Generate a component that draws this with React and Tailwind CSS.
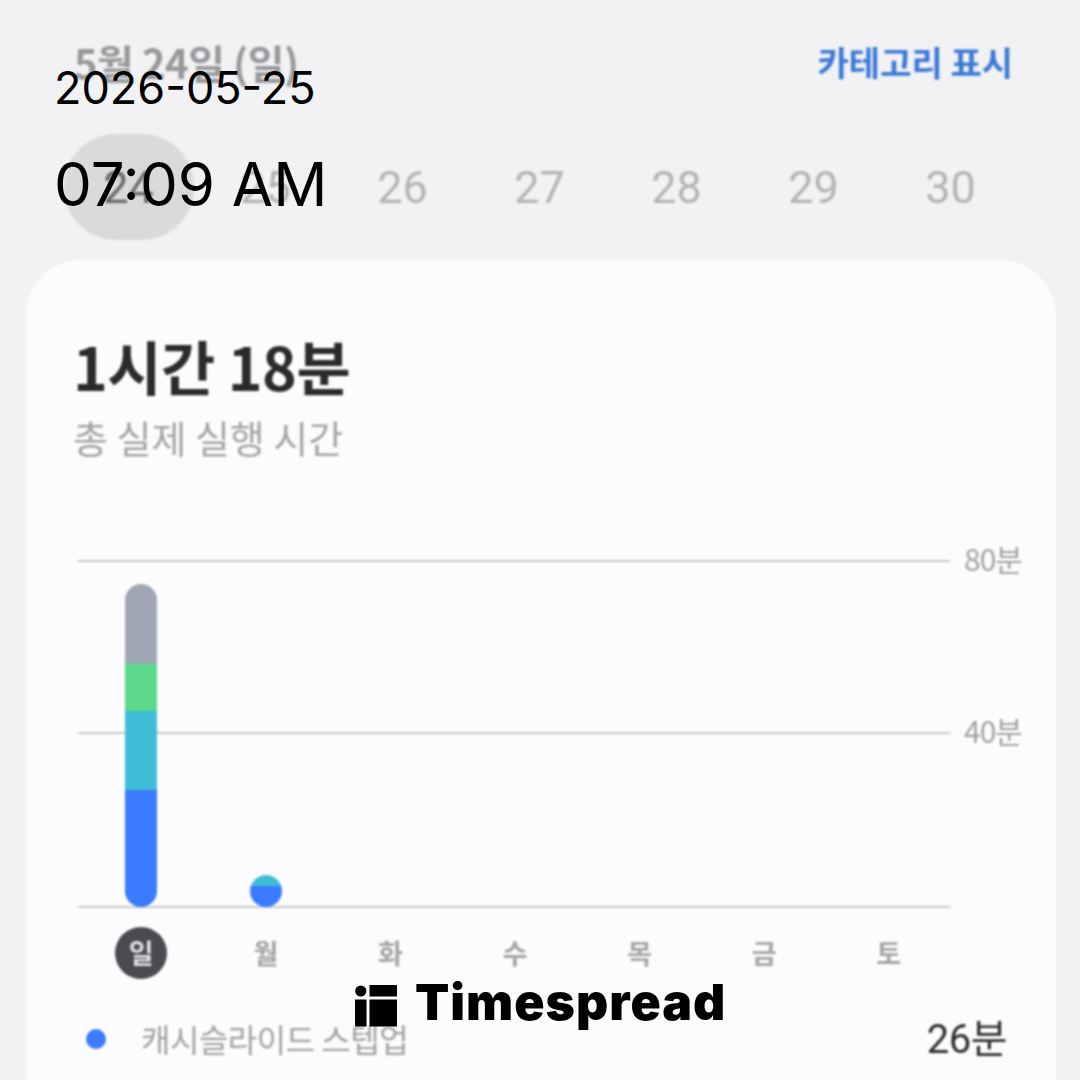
const kr = { fontFamily: '"Noto Sans CJK KR", sans-serif' };
const num = { fontFamily: 'Roboto, "Noto Sans CJK KR", sans-serif' };

const dates = ["24", "25", "26", "27", "28", "29", "30"];
const days = ["일", "월", "화", "수", "목", "금", "토"];

function GridLine({ label, className }) {
  return (
    <div className={className + " flex items-center h-[2px]"}>
      <div className="w-[872px] h-[2px] bg-[#c9c9cd]" />
      {label && <span className="ml-[14px] -translate-y-[3px] text-[30px] text-[#a2a2a5] tracking-[-1px]">{label}</span>}
    </div>
  );
}

export default function App() {
  return (
    <div className="relative w-[1080px] h-[1080px] overflow-hidden bg-[#f2f2f4]">
      <div className="blur-[0.8px]" style={kr}>
        <div className="flex justify-between items-center pl-[74px] pr-[67px] pt-[37px] h-[86px]">
          <span className="text-[40px] font-bold text-[#98989c] tracking-[-0.5px] leading-none">5월 24일 (일)</span>
          <span className="text-[34px] font-bold text-[#3b79d6] leading-none">카테고리 표시</span>
        </div>
        <div className="flex pl-[60px] mt-[48px] h-[106px]">
          {dates.map((d, i) => (
            <div
              key={d}
              className={
                i === 0
                  ? "w-[137px] flex items-center justify-center text-[45px] leading-none text-[#68686c]"
                  : "w-[137px] flex items-center justify-center text-[45px] leading-none text-[#b4b4b7]"
              }
              style={num}
            >
              {i === 0 ? (
                <span className="w-[130px] shrink-0 h-[106px] rounded-[52px] bg-[#dadadc] flex items-center justify-center">{d}</span>
              ) : (
                <span>{d}</span>
              )}
            </div>
          ))}
        </div>
        <div className="mt-[20px] ml-[26px] w-[1030px] h-[900px] rounded-t-[56px] bg-[#fcfcfe] pt-[74px] pl-[47px]">
          <div className="text-[59px] font-bold leading-[64px] text-[#2b2b2e] tracking-[-0.5px]">1시간 18분</div>
          <div className="mt-[16px] text-[38px] leading-[46px] text-[#a4a4a7]">총 실제 실행 시간</div>
          <div className="relative mt-[100px] ml-[5px] h-[348px] flex flex-col">
            <GridLine label="80분" className="" />
            <GridLine label="40분" className="mt-[170px]" />
            <GridLine className="mt-[172px]" />
            <div className="absolute left-[47px] bottom-[1px] w-[32px] h-[323px] rounded-full overflow-hidden flex flex-col">
              <div className="h-[80px] bg-[#a0a7b4]" />
              <div className="h-[47px] bg-[#5cd98a]" />
              <div className="h-[79px] bg-[#3fbdd6]" />
              <div className="h-[117px] bg-[#3a7bff]" />
            </div>
            <div className="absolute left-[172px] bottom-[1px] w-[32px] h-[32px] rounded-full overflow-hidden flex flex-col">
              <div className="h-[11px] bg-[#3fbdd6]" />
              <div className="h-[21px] bg-[#3a7bff]" />
            </div>
          </div>
          <div className="flex mt-[19px] ml-[6px] w-[872px]">
            {days.map((d, i) => (
              <div key={d} className="w-[124.6px] flex justify-center">
                <span
                  className={
                    i === 0
                      ? "w-[52px] h-[52px] rounded-full bg-[#4a4a4f] text-[#e2e2e4] flex items-center justify-center text-[27px] font-bold"
                      : "h-[52px] text-[#a4a4a7] flex items-center justify-center text-[27px] font-bold"
                  }
                >
                  {d}
                </span>
              </div>
            ))}
          </div>
          <div className="flex items-center mt-[35px] h-[50px]">
            <span className="ml-[13px] w-[20px] h-[20px] rounded-full bg-[#3a7bff]" />
            <span className="ml-[35px] text-[32px] text-[#a2a2a5] tracking-[-0.5px] -translate-y-[1px]">캐시슬라이드 스텝업</span>
            <span className="ml-auto mr-[49px] text-[40px] text-[#2f2f32] tracking-[-0.5px] translate-y-[1px]" style={num}>26분</span>
          </div>
        </div>
      </div>

      <div className="absolute left-[54px] top-[61px] text-[45px] leading-[54px] text-black" style={{ fontFamily: "Inter, sans-serif" }}>
        2026-05-25
      </div>
      <div className="absolute left-[54px] top-[147px] text-[60px] leading-[74px] text-black" style={{ fontFamily: "Inter, sans-serif" }}>
        07:09 AM
      </div>

      <div className="absolute left-[355px] top-[974px] flex items-center gap-[18px]">
        <svg width="42" height="42" viewBox="0 0 42 42" className="mt-[7px]">
          <circle cx="5.8" cy="6" r="5.6" fill="#000" />
          <rect x="0" y="14.5" width="11.5" height="27" fill="#000" />
          <rect x="14.5" y="0" width="27.5" height="11.5" fill="#000" />
          <rect x="14.5" y="14.5" width="27.5" height="27" fill="#000" />
        </svg>
        <span className="text-[50px] leading-[56px] font-black tracking-[1px] text-black" style={{ fontFamily: "Inter, sans-serif" }}>Timespread</span>
      </div>
    </div>
  );
}
